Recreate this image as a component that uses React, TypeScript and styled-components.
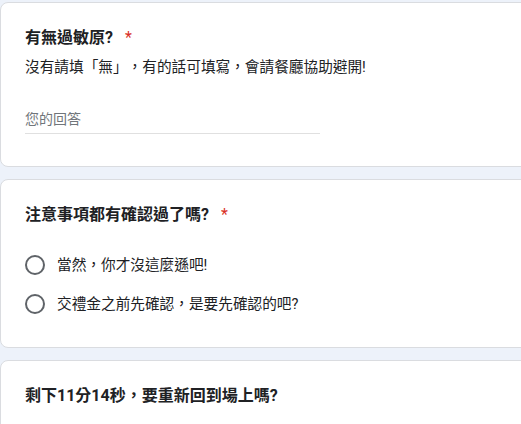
import styled, { createGlobalStyle } from 'styled-components';

const GlobalStyle = createGlobalStyle`
    html, body {
        margin: 0;
        padding: 0;
        background: #edf2fa;
        overflow: hidden;
    }
    body {
        font-family: Roboto, "Noto Sans CJK TC", Arial, sans-serif;
        color: #202124;
        text-spacing-trim: space-all;
    }
`;

interface Question {
    title: string;
    required?: boolean;
    description?: string;
    kind: 'text' | 'radio' | 'none';
    options?: string[];
}

const questions: Question[] = [
    {
        title: '有無過敏原?',
        required: true,
        description: '沒有請填「無」，有的話可填寫，會請餐廳協助避開!',
        kind: 'text',
    },
    {
        title: '注意事項都有確認過了嗎?',
        required: true,
        kind: 'radio',
        options: ['當然，你才沒這麼遜吧!', '交禮金之前先確認，是要先確認的吧?'],
    },
    {
        title: '剩下11分14秒，要重新回到場上嗎?',
        kind: 'none',
    },
];

const QuestionCard = ({ q }: { q: Question }) => {
    return (
        <Card $last={q.kind === 'none'}>
            <Title>
                {q.title}
                {q.required && <Star>*</Star>}
            </Title>
            {q.description && <Description>{q.description}</Description>}
            {q.kind === 'text' && (
                <AnswerField>
                    <span>您的回答</span>
                </AnswerField>
            )}
            {q.kind === 'radio' && (
                <Options>
                    {q.options?.map((opt) => (
                        <OptionRow key={opt}>
                            <Radio />
                            <OptionLabel>{opt}</OptionLabel>
                        </OptionRow>
                    ))}
                </Options>
            )}
        </Card>
    );
};

const App = () => {
    return (
        <Page>
            <GlobalStyle />
            {questions.map((q) => (
                <QuestionCard q={q} key={q.title} />
            ))}
        </Page>
    );
};

const Page = styled.div`
    display: flex;
    flex-direction: column;
    gap: 12px;
    padding-top: 2px;
    width: 640px;
    height: 424px;
`;

const Card = styled.div<{ $last?: boolean }>`
    background: #ffffff;
    border: 1px solid #dadce0;
    border-radius: 8px;
    padding: 23px 24px ${(p) => (p.$last ? '60px' : '24px')};
    flex-shrink: 0;
`;

const Title = styled.div`
    font-size: 16px;
    font-weight: bold;
    line-height: 24px;
    color: #202124;
`;

const Star = styled.span`
    color: #d93025;
    padding-left: 12px;
    font-weight: normal;
`;

const Description = styled.div`
    margin-top: 7px;
    font-size: 14.67px;
    line-height: 20px;
    color: #202124;
`;

const AnswerField = styled.div`
    margin-top: 30px;
    margin-bottom: 8px;
    width: 295px;
    height: 26px;
    border-bottom: 1px solid #e0e0e0;
    font-size: 14px;
    line-height: 24px;
    color: #70757a;
`;

const Options = styled.div`
    display: flex;
    flex-direction: column;
    margin-top: 18px;
`;

const OptionRow = styled.div`
    display: flex;
    align-items: center;
    height: 39px;
    gap: 12px;
`;

const Radio = styled.div`
    width: 16px;
    height: 16px;
    border: 2px solid #5f6368;
    border-radius: 50%;
    flex-shrink: 0;
`;

const OptionLabel = styled.div`
    font-size: 14.67px;
    line-height: 20px;
    color: #202124;
`;

export default App;
